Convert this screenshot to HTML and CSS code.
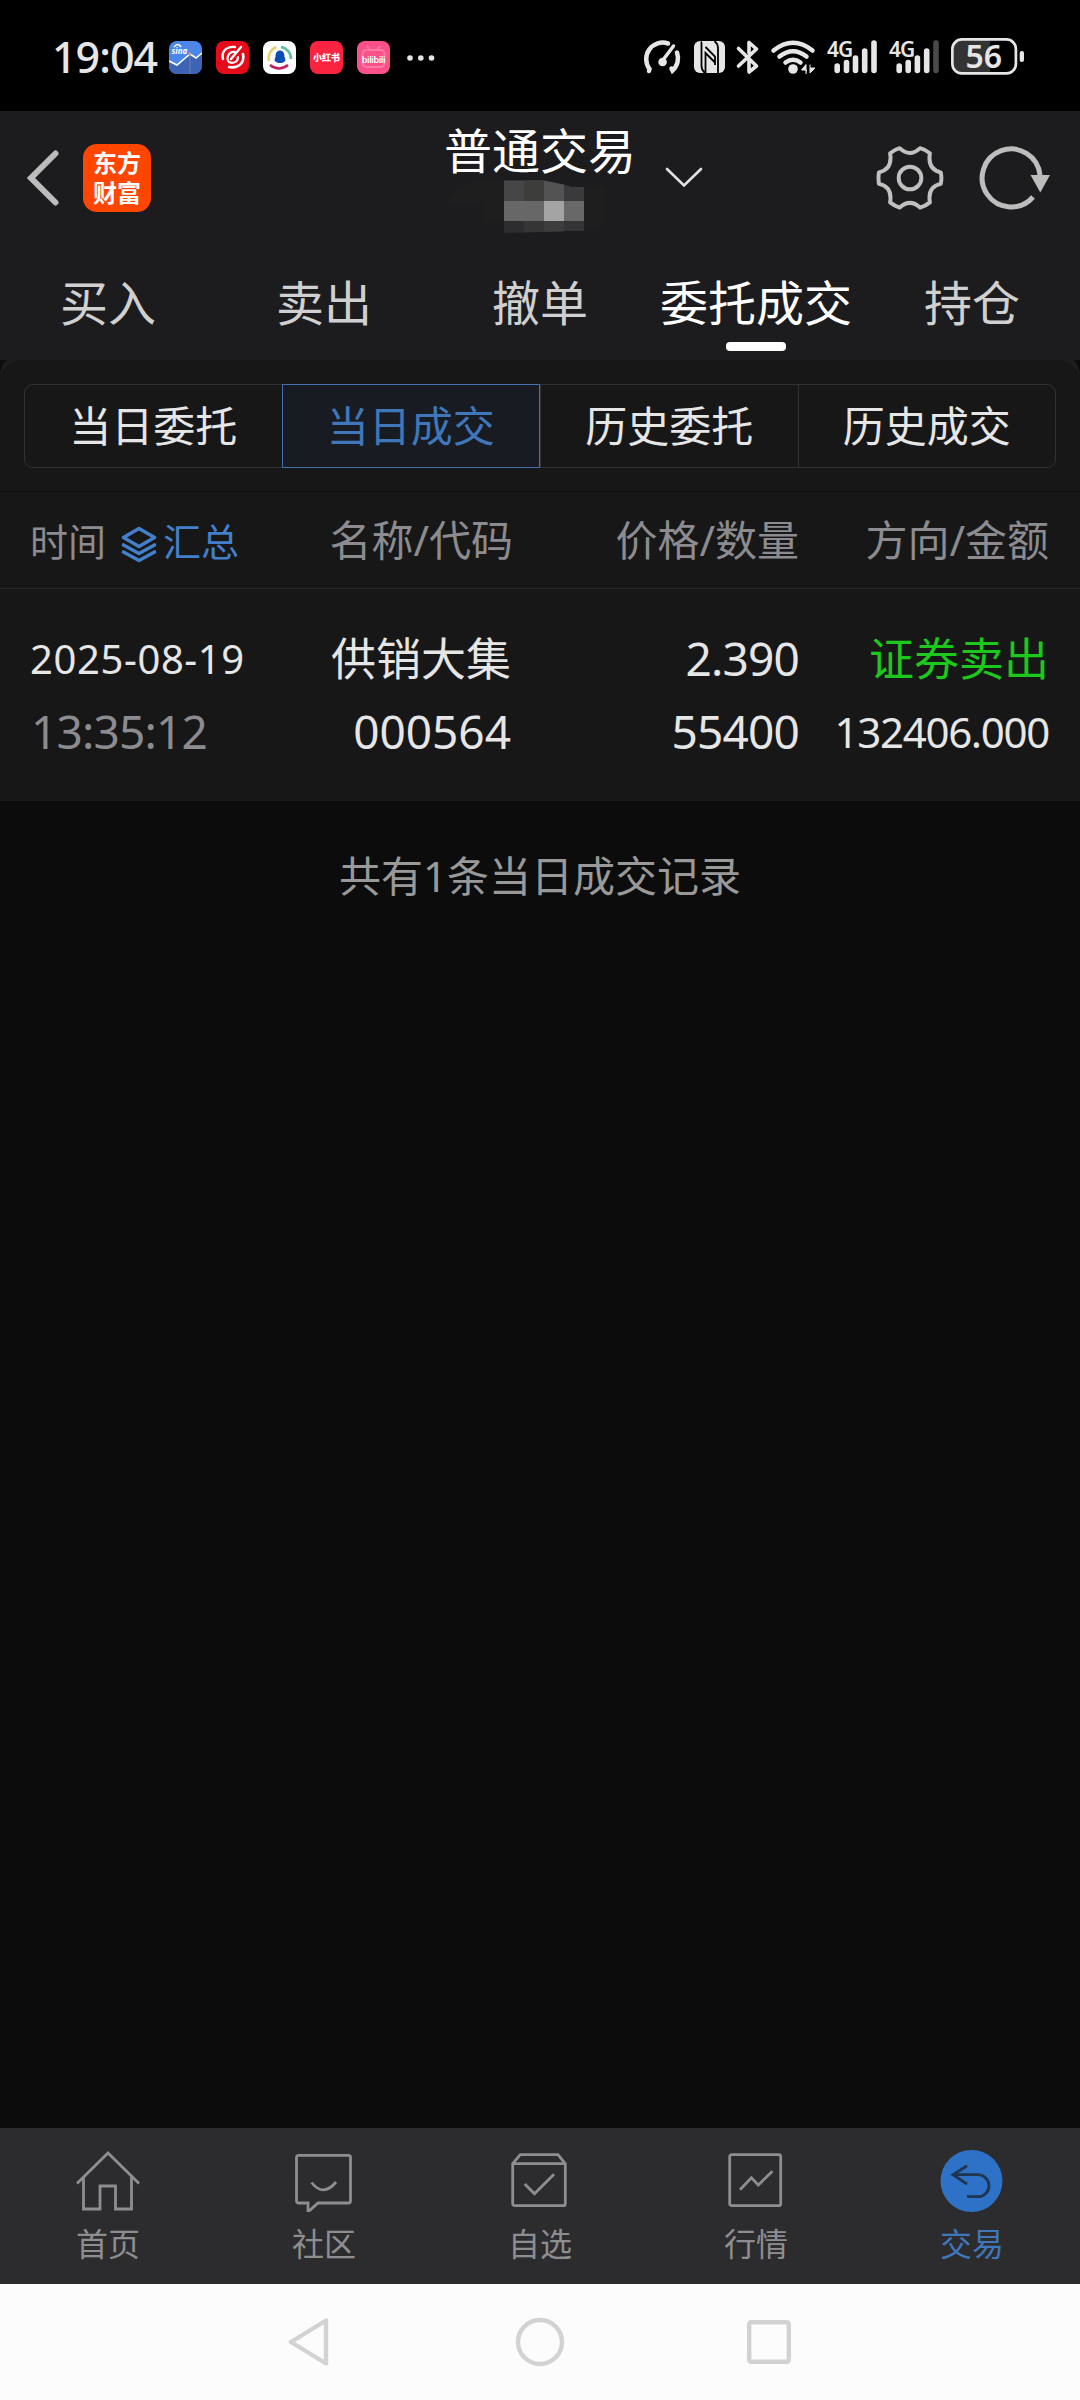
FILE: index.html
```html
<!DOCTYPE html>
<html lang="zh-CN">
<head>
  <meta charset="UTF-8" />
  <meta name="viewport" content="width=device-width, initial-scale=1.0"/>
  <title>普通交易 - 当日成交</title>
  <link rel="stylesheet" href="styles.css">
</head>
<body>
  <div class="status-bar">
    <span class="clock">19:04</span>
    <div class="app-icons">
      <svg class="app" viewBox="0 0 33 33">
        <rect width="33" height="33" rx="8" fill="#4b86ea"/>
        <path d="M0 20L8 24L21 13L27 17L33 12V25a8 8 0 0 1-8 8H8a8 8 0 0 1-8-8z" fill="#3c63b4"/>
        <path d="M0 20L8 24L21 13L27 17L33 12" fill="none" stroke="#fff" stroke-width="1.6"/>
        <path d="M21 0V33" stroke="#7a86a8" stroke-width="0.8"/>
        <circle cx="21" cy="13" r="1.6" fill="#c9a48c"/>
        <path d="M5 6q4-5 7 0" fill="none" stroke="#fff" stroke-width="1.5"/>
        <text x="2.5" y="12.5" class="sina">sina</text>
      </svg>
      <svg class="app" viewBox="0 0 33 33">
        <rect width="33" height="33" rx="8" fill="#e60b18"/>
        <g fill="none" stroke="#fff" stroke-linecap="round">
          <path d="M19 6C10 5 5 11 7 18" stroke-width="2.4"/>
          <path d="M27 13C29 22 22 28 13 26" stroke-width="2.6"/>
          <path d="M19 11C12 10 10 18 13 21C17 23 22 21 22 16" stroke-width="2.2"/>
          <path d="M25 6L15 18" stroke-width="2.4"/>
        </g>
      </svg>
      <svg class="app" viewBox="0 0 33 33">
        <rect width="33" height="33" rx="8" fill="#fff"/>
        <g fill="none" stroke-width="2.6">
          <path d="M6 20A12 12 0 0 1 13 6" stroke="#ead06c"/>
          <path d="M18 6A12 12 0 0 1 28 18" stroke="#5dbf9f"/>
          <path d="M7 24Q16 31 25 24" stroke="#c41f62"/>
        </g>
        <path d="M17 9.500c4 0 4.500 4 4.500 6.500c1.500 3 1 5-.5 4.500c-1 2-7 2-8 0c-1.500.5-2-1.500-.5-4.500c0-2.500.5-6.500 4.500-6.500z" fill="#0b4db5"/>
      </svg>
      <svg class="app" viewBox="0 0 33 33">
        <rect width="33" height="33" rx="8" fill="#fb2440"/>
        <text x="16.500" y="20" class="redbook">小红书</text>
      </svg>
      <svg class="app" viewBox="0 0 33 33">
        <rect width="33" height="33" rx="8" fill="#fb5089"/>
        <rect x="5.500" y="9" width="22" height="17" rx="4" fill="none" stroke="#fd7aa6" stroke-width="2"/>
        <path d="M10 5l3 4M23 5l-3 4" stroke="#fd7aa6" stroke-width="2"/>
        <text x="16.500" y="21.500" class="bili">bilibili</text>
      </svg>
    </div>
    <svg class="dots" viewBox="0 0 28 8" fill="#e6e6e6">
      <circle cx="3" cy="4" r="2.800"/><circle cx="13.800" cy="4" r="2.800"/><circle cx="24.500" cy="4" r="2.800"/>
    </svg>

    <svg class="sys-icons" viewBox="0 -10 390 60" fill="none" stroke="#e6e6e6">
      <!-- speed -->
      <g stroke-width="4.500" stroke-linecap="round">
        <path d="M9 36L9.500 34A16.500 16.500 0 0 1 28 8.500"/>
        <path d="M37 17.500A16.500 16.500 0 0 1 32.500 35.500L31.500 33.500"/>
        <path d="M33.500 11L23 25" stroke-width="3.500"/>
      </g>
      <circle cx="22.600" cy="27" r="4.300" fill="#e6e6e6" stroke="none"/>
      <!-- nfc -->
      <rect x="54" y="6" width="31" height="32" rx="6" fill="#e6e6e6" stroke="none"/>
      <path d="M61 6.500Q61.500 7 61.500 9V31Q61.500 35 65 38M74.500 6Q78 9 78 13V38" stroke="#000" stroke-width="1.800"/>
      <path d="M65.500 38V18L75 27.500M65.500 12L75 21.500V30" stroke="#000" stroke-width="1.800"/>
      <!-- bluetooth -->
      <path d="M98.500 13.500L116.500 31L109 37V24M98.500 31L116.500 14L109 7.500V18" stroke-width="3.600" stroke-linecap="round" stroke-linejoin="round"/>
      <!-- wifi -->
      <g stroke-width="4.500" stroke-linecap="round">
        <path d="M133.500 15.500Q153 0 172.500 15.500"/>
        <path d="M139.500 21.500Q153 11 166.500 21.500"/>
        <path d="M145.500 27.500Q153 22 160.500 27.500"/>
      </g>
      <circle cx="153" cy="34" r="4.800" fill="#e6e6e6" stroke="none"/>
      <path d="M166 39V29.500L161.500 35H167M170 29.500V38L175 33H170" fill="#e6e6e6" stroke-width="1"/>
      <!-- signal 1 -->
      <text x="187" y="21.500" class="net">4G</text>
      <g stroke-width="5.600" stroke-linecap="round">
        <path d="M197.200 31V35.500M206.500 27.500V35.500M215.500 23V35.500M224.700 16V35.500M234 8V35.500"/>
        <path d="M259.200 31V35.500M268.200 27.500V35.500M277.400 23V35.500M286.700 16V35.500"/>
        <path d="M296 8V35.500" stroke="#4a4a4a"/>
      </g>
      <!-- signal 2 -->
      <text x="249" y="21.500" class="net">4G</text>
      <!-- battery -->
      <path d="M350 5H321a7 7 0 0 0-7 7V30a7 7 0 0 0 7 7H350z" fill="#343434" stroke="none"/>
      <rect x="312.400" y="4.400" width="63.500" height="34" rx="9.500" stroke-width="2.700"/>
      <rect x="379.700" y="16" width="4.300" height="11" rx="2" fill="#e6e6e6" stroke="none"/>
      <text x="343.700" y="33" class="battery">56</text>
    </svg>
  </div>

  <div class="header">
    <div class="header-left">
      <svg class="back" viewBox="0 0 34 58"><path d="M29.500 4.500L5 29L29.500 53.500" fill="none" stroke="#bcbcbd" stroke-width="6" stroke-linecap="round"/></svg>
      <div class="logo">东方<br>财富</div>
    </div>
    <div class="header-title">
      <h1>普通交易</h1>
      <svg class="mosaic" viewBox="0 0 192 54">
        <path d="M36 0L60 1V41H40V22H0Q14 7 36 0z" fill="#1e1e1f"/>
        <path d="M60 0.500H100V21H60z" fill="#464648"/>
        <path d="M80 0.500H100V21H80z" fill="#3d3d3c"/>
        <path d="M100 0.500L120 4.500V21H100z" fill="#535354"/>
        <path d="M120 4.500L128 7H140V21H120z" fill="#3a3a3c"/>
        <path d="M60 21H100V41H60z" fill="#676767"/>
        <path d="M100 21H120V41H100z" fill="#a4a4a4"/>
        <path d="M120 21H140V41H120z" fill="#686868"/>
        <path d="M60 41H80V52.500L60 53z" fill="#2d2d2f"/>
        <path d="M80 41H100V52L80 52.500z" fill="#353536"/>
        <path d="M100 41H120V51.500L100 52z" fill="#3d3d3e"/>
        <path d="M120 41H140V51H120z" fill="#343436"/>
        <path d="M140 7L160 8V46H140z" fill="#1e1e1f"/>
      </svg>
    </div>
    <svg class="arrow-down" viewBox="0 0 38 22"><path d="M2 3L19 19.500L36 3" fill="none" stroke="#e2e2e2" stroke-width="2.600" stroke-linecap="round"/></svg>
    <svg class="gear" viewBox="-2 -2 70 68" fill="none" stroke="#c0c0c0" stroke-width="4" stroke-linejoin="round">
      <path d="M22 1.700Q32.500 11.500 42.700 1.700Q48 3 52.700 7Q50 23 63.700 26.300Q65 32 63.700 38Q50 41 52.700 56.700Q48 60.500 42.700 62Q32.500 52.500 22 62Q17 60.500 12.300 56.700Q15 41 1 38Q0 32 1 26.300Q15 23 12.300 7Q17 3 22 1.700z"/>
      <circle cx="32.500" cy="32" r="11.500"/>
    </svg>
    <svg class="refresh" viewBox="0 0 76 66">
      <path d="M65 30A29 29 0 1 0 58 52" fill="none" stroke="#bdbdbd" stroke-width="5"/>
      <path d="M55.500 30H75L65.300 47.500z" fill="#bdbdbd"/>
    </svg>
  </div>

  <div class="tabs">
    <div class="tab">买入</div>
    <div class="tab">卖出</div>
    <div class="tab">撤单</div>
    <div class="tab active">委托成交</div>
    <div class="tab">持仓</div>
  </div>

  <div class="panel">
    <div class="segment">
      <div class="segment-item">当日委托</div>
      <div class="segment-item selected">当日成交</div>
      <div class="segment-item">历史委托</div>
      <div class="segment-item">历史成交</div>
    </div>
    <div class="table-head">
      <div class="time-head">
        <span>时间</span>
        <svg class="layers" viewBox="0 0 36 37" fill="none" stroke="#437fcb" stroke-width="3.600" stroke-linejoin="round" stroke-linecap="round">
          <path d="M18 2.500L33.500 11.500L18 20.500L2.500 11.500z"/>
          <path d="M2.500 19L18 27.500L33.500 19M2.500 26L18 34.500L33.500 26"/>
        </svg>
        <span class="summary">汇总</span>
      </div>
      <div>名称/代码</div>
      <div>价格/数量</div>
      <div>方向/金额</div>
    </div>
    <div class="record">
      <div class="date">2025-08-19</div>
      <div class="name">供销大集</div>
      <div class="number">2.390</div>
      <div class="side sell">证券卖出</div>
      <div class="time">13:35:12</div>
      <div class="code">000564</div>
      <div class="number">55400</div>
      <div class="amount">132406.000</div>
    </div>
  </div>

  <div class="total">共有1条当日成交记录</div>

  <div class="bottom-bar">
    <div class="bar-item">
      <svg viewBox="0 0 64 64"><path d="M1 34.500L32 4L63 34.500M7.500 28V60H24V37H39.500V60H55.500V28"/></svg>
      <span>首页</span>
    </div>
    <div class="bar-item">
      <svg viewBox="0 0 64 64"><path d="M6.500 6.300H56.500a2 2 0 0 1 2 2V52a2 2 0 0 1-2 2H26L17.500 61.500H16V54H6.500a2 2 0 0 1-2-2V8.300a2 2 0 0 1 2-2zM19.500 33.500Q31.500 48.500 44 33"/></svg>
      <span>社区</span>
    </div>
    <div class="bar-item">
      <svg viewBox="0 0 64 64"><path d="M4.700 14.700L12.300 5.700H50L57.300 14.700V54.700a2 2 0 0 1-2 2H6.700a2 2 0 0 1-2-2zM4.700 14.700H57M16.800 35L26.400 44.700L46 25.300"/></svg>
      <span>自选</span>
    </div>
    <div class="bar-item">
      <svg viewBox="0 0 64 64"><rect x="5.700" y="5.700" width="51" height="51" rx="2"/><path d="M16 40.700L27.400 28.700L34.300 36L48.400 22.300"/></svg>
      <span>行情</span>
    </div>
    <div class="bar-item current">
      <svg viewBox="0 0 64 64"><circle cx="31.500" cy="32" r="31" fill="#2d72c6" stroke="none"/><path d="M27 16.700L13 25.700L27 35M13 25.700H38a11 11 0 0 1 0 22H27" stroke="#1f3552"/></svg>
      <span>交易</span>
    </div>
  </div>

  <div class="nav-bar">
    <svg class="nav-back" viewBox="0 0 42 50"><path d="M38 3.500V46.500L3 25z"/></svg>
    <svg class="nav-home" viewBox="0 0 50 50"><circle cx="25" cy="25" r="22"/></svg>
    <svg class="nav-recent" viewBox="0 0 44 46"><rect x="2.200" y="3.200" width="39.600" height="39.600" rx="2"/></svg>
  </div>
</body>
</html>
```
FILE: styles.css
```css
* {
  box-sizing: border-box;
}
body {
  font-family: "Noto Sans", "Noto Sans CJK SC", sans-serif;
  margin: 0;
  width: 1080px;
  height: 2400px;
  display: flex;
  flex-direction: column;
  background-color: #0c0c0c;
  color: #e6e6e6;
}
svg {
  display: block;
  flex: none;
}

/* status bar */
.status-bar {
  height: 111px;
  padding-top: 2px;
  display: flex;
  align-items: center;
  background: #000;
}
.clock {
  width: 117px;
  margin-left: 52px;
  font-size: 43px;
  font-weight: 500;
  line-height: 60px;
  letter-spacing: -1px;
}
.app-icons {
  display: flex;
  gap: 14px;
  margin-top: 2px;
}
.app {
  width: 33px;
  height: 33px;
}
.sina {
  font-size: 8px;
  font-weight: bold;
  font-style: italic;
  fill: #fff;
}
.redbook {
  font-size: 9px;
  font-weight: 900;
  text-anchor: middle;
  fill: #fff;
}
.bili {
  font-size: 9px;
  font-weight: 600;
  letter-spacing: -0.4px;
  text-anchor: middle;
  fill: #fff;
}
.dots {
  width: 28px;
  height: 8px;
  margin-left: 17px;
  margin-top: 2px;
}
.sys-icons {
  width: 390px;
  height: 60px;
  margin-left: 205px;
  margin-bottom: 3px;
}
.net, .battery {
  fill: #e6e6e6;
  stroke: none;
  font-weight: 600;
}
.net {
  font-size: 21px;
  letter-spacing: -1px;
}
.battery {
  font-size: 32px;
  text-anchor: middle;
}

/* header */
.header {
  height: 134px;
  display: flex;
  align-items: center;
  background: #1c1c1e;
}
.header-left {
  width: 444px;
  display: flex;
  align-items: center;
}
.back {
  width: 34px;
  height: 58px;
  margin-left: 26px;
}
.logo {
  width: 68px;
  height: 68px;
  margin-left: 23px;
  padding-top: 3px;
  border-radius: 14px;
  background: #ff4600;
  color: #fff;
  text-align: center;
  font-family: "Noto Sans CJK SC", sans-serif;
  font-size: 24px;
  font-weight: 700;
  line-height: 30px;
}
.header-title {
  align-self: flex-start;
  width: 192px;
  padding-top: 16px;
}
h1 {
  margin: 0;
  font-size: 48px;
  font-weight: 400;
  line-height: 48px;
  color: #fff;
}
.mosaic {
  width: 192px;
  height: 54px;
  margin-top: 5px;
}
.arrow-down {
  width: 38px;
  height: 22px;
  margin-left: 29px;
  margin-bottom: 2px;
}
.gear {
  width: 69px;
  height: 68px;
  margin-left: 173px;
}
.refresh {
  width: 76px;
  height: 66px;
  margin-left: 30px;
}

/* main tabs */
.tabs {
  height: 115px;
  display: flex;
  background: #1c1c1e;
}
.tab {
  position: relative;
  width: 216px;
  text-align: center;
  font-size: 48px;
  line-height: 116px;
  color: #d0d0d0;
}
.tab.active {
  color: #fff;
}
.tab.active::after {
  content: "";
  position: absolute;
  left: 78px;
  bottom: 9px;
  width: 60px;
  height: 9px;
  border-radius: 4px;
  background: #fff;
}

/* list panel */
.panel {
  height: 441px;
  padding-top: 24px;
  background: linear-gradient(#171717, #171717) padding-box;
  border-radius: 24px 24px 0 0;
  box-shadow: 0 -8px 0 #1c1c1e;
}
.segment {
  height: 84px;
  margin: 0 24px;
  display: flex;
  border: 1px solid #323234;
  border-radius: 9px;
}
.segment-item {
  flex: 1;
  text-align: center;
  font-size: 42px;
  line-height: 82px;
}
.segment-item + .segment-item {
  border-left: 1px solid #323234;
}
.segment-item.selected {
  margin: -1px 0;
  border: 1px solid #4471ad;
  background: #181c22;
  color: #3f77ba;
}
.table-head, .record {
  display: grid;
  grid-template-columns: 232px 251px 286px 250px;
  padding: 0 31px 0 30px;
  text-align: right;
}
.table-head {
  height: 98px;
  margin-top: 23px;
  border-top: 1px solid #0e0e0e;
  border-bottom: 1px solid #262627;
  font-size: 42px;
  line-height: 96px;
  color: #8c8b90;
}
.time-head {
  display: flex;
  align-items: center;
  height: 98px;
  font-size: 38px;
}
.layers {
  width: 36px;
  height: 37px;
  margin: 6px 6px 0 15px;
}
.summary {
  color: #437fcb;
}
.record {
  padding-top: 33px;
  font-size: 46px;
  line-height: 73px;
}
.date {
  font-size: 40px;
  letter-spacing: 0.6px;
  text-align: left;
}
.name, .side {
  font-size: 45px;
}
.name, .code {
  padding-right: 2px;
}
.sell {
  color: #1cc81c;
}
.time {
  padding-left: 1px;
  text-align: left;
  letter-spacing: -0.8px;
  color: #8c8b90;
}
.number {
  letter-spacing: -0.8px;
}
.amount {
  font-size: 42px;
  letter-spacing: -1.3px;
}
.total {
  margin-top: 54px;
  text-align: center;
  font-size: 42px;
  line-height: 42px;
  color: #999;
}

/* bottom bar */
.bottom-bar {
  height: 156px;
  margin-top: auto;
  display: flex;
  background: #2c2c2e;
}
.bar-item {
  width: 216px;
  padding-top: 21px;
  display: flex;
  flex-direction: column;
  align-items: center;
  gap: 11px;
  font-size: 32px;
  line-height: 40px;
  color: #8e8e90;
}
.bar-item svg {
  width: 64px;
  height: 64px;
  fill: none;
  stroke: #8e8e90;
  stroke-width: 2.8;
}
.bar-item.current {
  color: #3f77ba;
}

/* phone navigation */
.nav-bar {
  height: 116px;
  display: flex;
  align-items: center;
  background: #fcfcfc;
}
.nav-bar svg {
  fill: none;
  stroke: #d2d2d2;
  stroke-width: 4.4;
  stroke-linejoin: round;
}
.nav-back {
  width: 42px;
  height: 50px;
  margin-left: 288px;
}
.nav-home {
  width: 50px;
  height: 50px;
  margin-left: 185px;
}
.nav-recent {
  width: 44px;
  height: 46px;
  margin-left: 182px;
}
```
